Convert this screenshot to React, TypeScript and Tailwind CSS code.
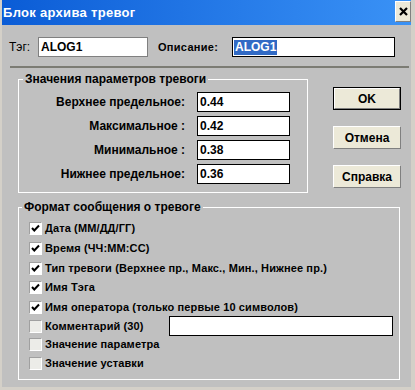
import React from "react"

const font = { fontFamily: '"Liberation Sans", Arial, sans-serif' }

function Field({ value, className = "" }: { value: string; className?: string }) {
  return (
    <div className={`h-[20px] bg-white border border-black flex items-center pl-[2px] font-bold text-black ${className}`}>
      {value}
    </div>
  )
}

function Btn({ label, def = false }: { label: string; def?: boolean }) {
  return (
    <div className={`w-[68px] h-[23px] ${def ? "border border-black" : ""}`}>
      <div className="h-full w-full bg-[#ece9d8] border-t border-l border-white border-r border-b border-r-[#808080] border-b-[#808080] flex items-center justify-center text-[12px] font-bold text-black">
        {label}
      </div>
    </div>
  )
}

function Check({ checked, label, h, children }: { checked: boolean; label: string; h: string; children?: React.ReactNode }) {
  return (
    <div className={`flex items-center ${h}`}>
      <div className={`w-[13px] h-[13px] border border-t-[#a0a0a0] border-l-[#a0a0a0] border-r-white border-b-white ${checked ? "bg-white" : "bg-[#ecece8]"} flex items-center justify-center`}>
        {checked && (
          <svg width="9" height="9" viewBox="0 0 9 9">
            <path d="M1 4 L3.3 6.5 L8 1.5" stroke="#000" strokeWidth="2" fill="none" />
          </svg>
        )}
      </div>
      <span className="ml-[3px] text-[11px] font-bold text-black whitespace-nowrap tracking-[0.12px]">{label}</span>
      {children}
    </div>
  )
}

export default function App() {
  const limits = [
    { label: "Верхнее предельное:", value: "0.44" },
    { label: "Максимальное :", value: "0.42" },
    { label: "Минимальное :", value: "0.38" },
    { label: "Нижнее предельное:", value: "0.36" },
  ]

  return (
    <div style={font} className="w-[415px] h-[390px] bg-[#c0c0c0] flex flex-col border-l-2 border-r-[4px] border-b-[3px] border-[#d4d0c8] overflow-hidden">
      {/* title bar */}
      <div className="h-[25px] shrink-0 bg-gradient-to-r from-[#0a5cd6] to-[#3a92f6] flex items-center justify-between pl-[1px] pr-0">
        <span className="text-white text-[13px] font-bold tracking-[0.3px]">Блок архива тревог</span>
        <div className="w-[16px] h-[21px] -mt-[2px] bg-[#ece9d8] border-t border-l border-white border-r border-b border-r-[#808080] border-b-[#808080] flex items-center justify-center">
          <svg width="9" height="9" viewBox="0 0 9 9">
            <path d="M1 1 L8 8 M8 1 L1 8" stroke="#000" strokeWidth="2.2" />
          </svg>
        </div>
      </div>

      <div className="flex flex-col px-[6px] pt-[12px]">
        {/* tag row */}
        <div className="flex items-center">
          <span className="w-[30px] pl-[1px] text-[12px] text-black">Тэг:</span>
          <div className="w-[110px] h-[20px] bg-white border border-[#808080] flex items-center pl-[2px] text-[12px] font-bold text-black">ALOG1</div>
          <span className="ml-[10px] w-[74px] text-[11px] font-bold text-black tracking-[0.3px]">Описание:</span>
          <div className="w-[163px] h-[20px] bg-white border border-black flex items-center pl-[1px]">
            <span className="bg-[#316ac5] text-white text-[12px] font-bold leading-[15px] px-[1px]">ALOG1</span>
          </div>
        </div>

        <div className="mt-[9px] ml-[2px] w-[399px] h-[2px] bg-[#7c7c74]" />

        {/* limits group + buttons */}
        <div className="flex items-start mt-[4px] ml-[10px]">
          <fieldset className="w-[290px] border border-white pl-[1px] pb-[8px]">
            <legend className="ml-[3px] px-[2px] text-[12px] font-bold text-black leading-[14px]">Значения параметров тревоги</legend>
            <div className="flex flex-col gap-[4px] pt-[6px]">
              {limits.map((l) => (
                <div key={l.label} className="flex items-center">
                  <span className="w-[165px] text-right text-[12px] font-bold text-black">{l.label}</span>
                  <Field value={l.value} className="ml-[12px] w-[93px] text-[12px]" />
                </div>
              ))}
            </div>
          </fieldset>
          <div className="flex flex-col gap-[16px] ml-[25px] mt-[15px]">
            <Btn label="OK" def />
            <Btn label="Отмена" />
            <Btn label="Справка" />
          </div>
        </div>

        {/* message format group */}
        <fieldset className="mt-[7px] ml-[10px] w-[382px] border border-white pl-[10px] pt-[4px] pb-[6px]">
          <legend className="ml-[-7px] px-[2px] text-[12px] font-bold text-black leading-[14px]">Формат сообщения о тревоге</legend>
          <Check checked label="Дата (ММ/ДД/ГГ)" h="h-[20px]" />
          <Check checked label="Время (ЧЧ:ММ:СС)" h="h-[20px]" />
          <Check checked label="Тип тревоги (Верхнее пр., Макс., Мин., Нижнее пр.)" h="h-[20px]" />
          <Check checked label="Имя Тэга" h="h-[19px]" />
          <Check checked label="Имя оператора (только первые 10 символов)" h="h-[20px]" />
          <Check checked={false} label="Комментарий (30)" h="h-[18px]">
            <div className="ml-auto mr-[6px] w-[224px] h-[20px] bg-white border border-black" />
          </Check>
          <Check checked={false} label="Значение параметра" h="h-[19px]" />
          <Check checked={false} label="Значение уставки" h="h-[19px]" />
        </fieldset>
      </div>
    </div>
  )
}
